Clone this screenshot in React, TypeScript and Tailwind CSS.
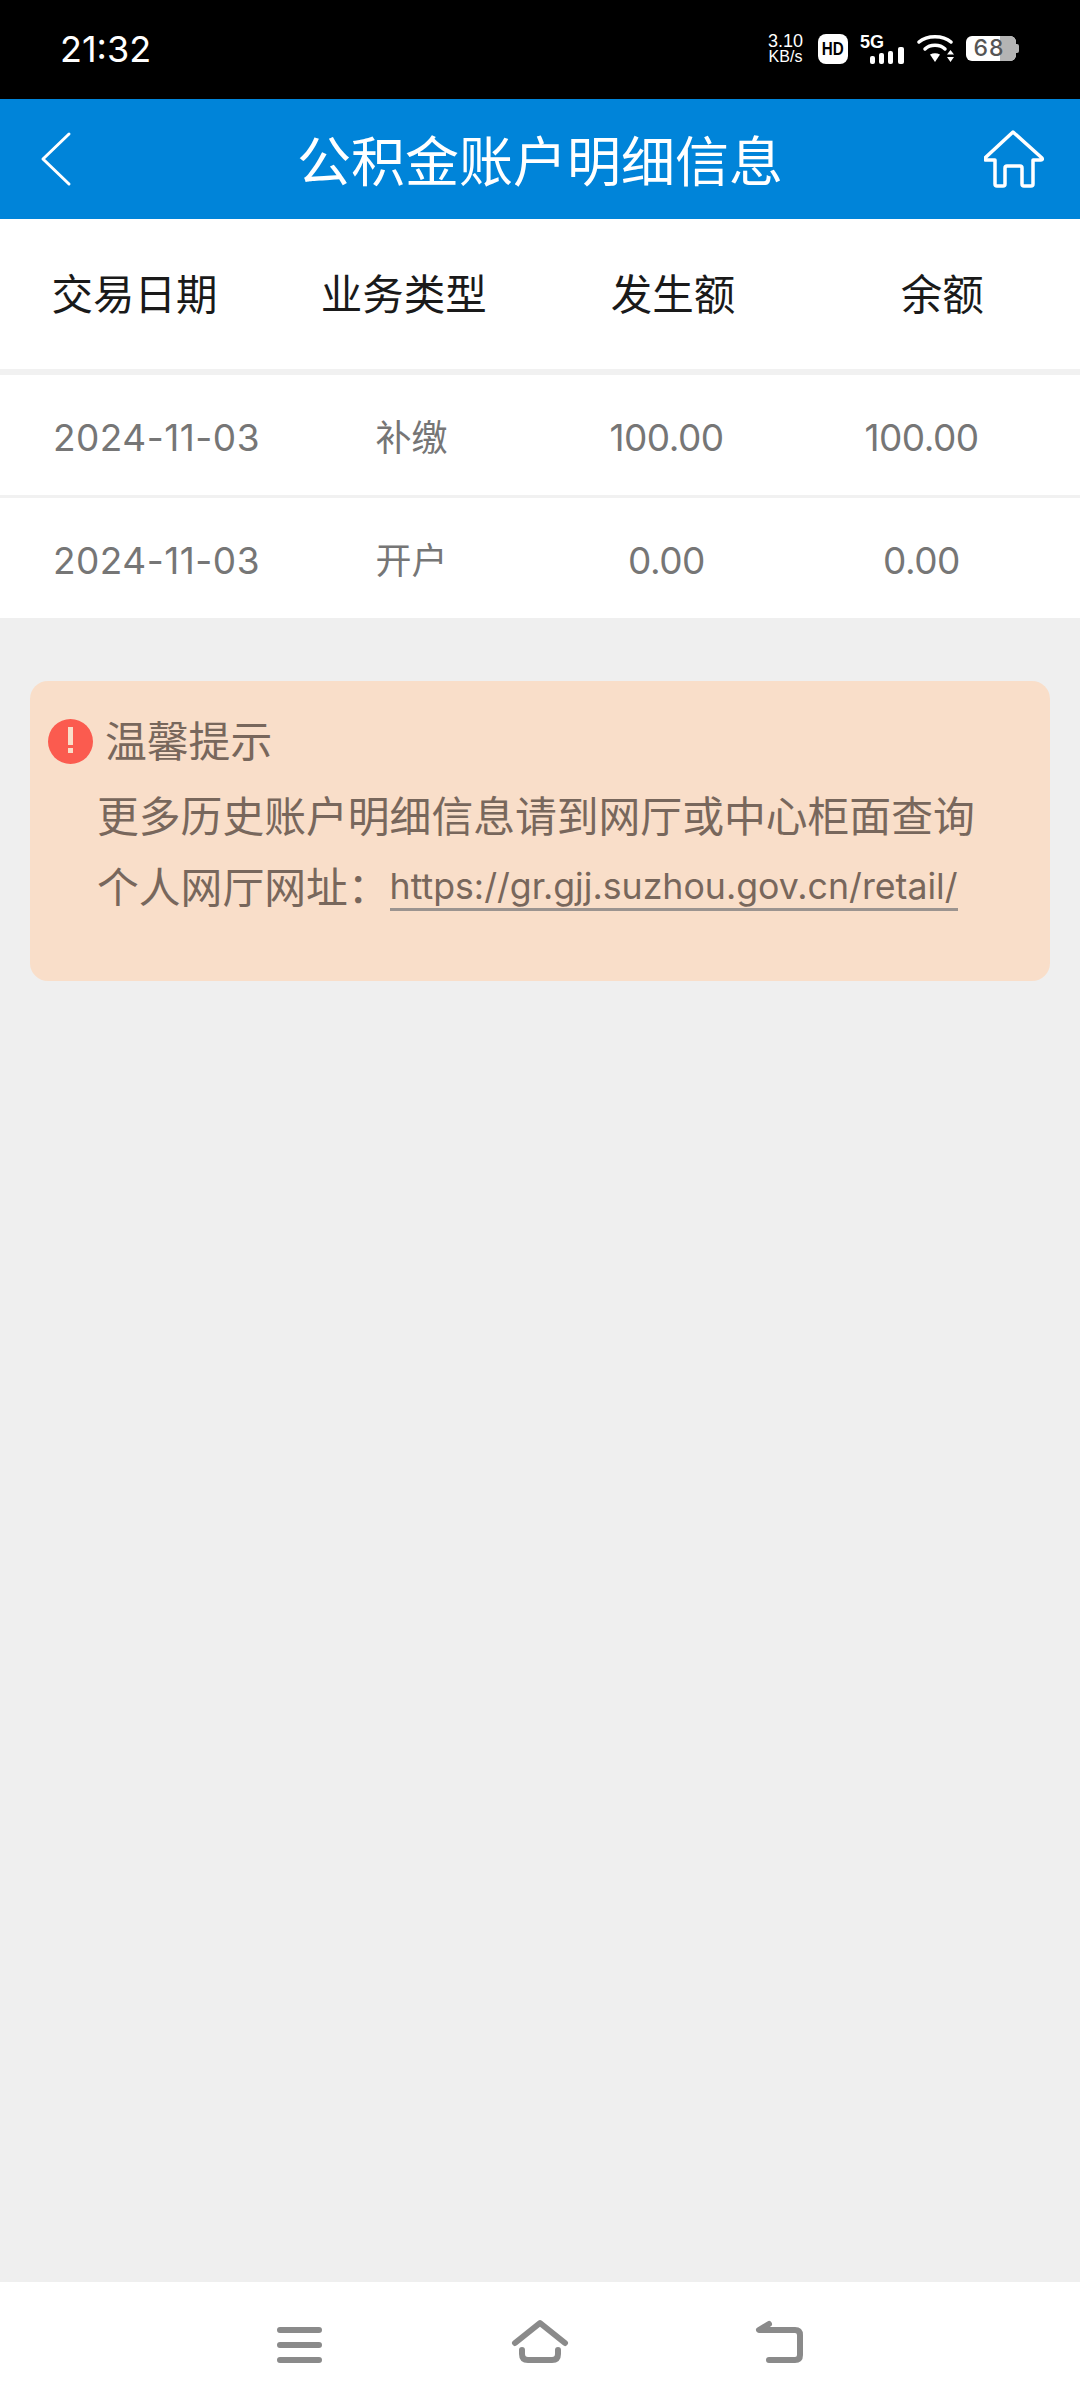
const cjk = "font-['Inter','Noto_Sans_CJK_SC',sans-serif]";

function StatusBar() {
  return (
    <div className="flex h-[99px] items-center justify-between bg-black pb-[2px] pl-[60px] pr-[61px] text-white">
      <span className="font-['Inter',sans-serif] text-[36px] leading-none">21:32</span>
      <div className="flex items-center">
        <div className="flex w-[37px] flex-col items-center font-['Liberation_Sans',sans-serif] text-white">
          <span className="text-[18px] leading-[16px]">3.10</span>
          <span className="text-[16px] leading-[15px]">KB/s</span>
        </div>
        <div className="ml-[14px] flex h-[30px] w-[30px] items-center justify-center rounded-[8px] bg-white">
          <span className="scale-x-[0.8] font-['Liberation_Sans',sans-serif] text-[19px] font-bold leading-none text-black">HD</span>
        </div>
        <div className="relative ml-[12px] h-[30px] w-[45px]">
          <span className="absolute left-0 top-0 font-['Liberation_Sans',sans-serif] text-[18px] font-bold leading-[17px]">5G</span>
          <svg className="absolute bottom-0 left-0" width="45" height="17" viewBox="0 0 45 17" fill="white">
            <rect x="10" y="9" width="5" height="8" rx="2" />
            <rect x="19" y="6" width="5" height="11" rx="2" />
            <rect x="28" y="4" width="5" height="13" rx="2" />
            <rect x="38" y="0" width="6" height="17" rx="2" />
          </svg>
        </div>
        <svg className="ml-[12px]" width="38" height="28" viewBox="0 0 38 28" fill="none">
          <path d="M2 7 C10 0 26 0 34 7" stroke="white" strokeWidth="3.500" strokeLinecap="round" />
          <path d="M8 14 C13 9 23 9 28 14" stroke="white" strokeWidth="3.500" strokeLinecap="round" />
          <path d="M13 19.500 Q18 17 23 19.500 L18 27 Z" fill="white" />
          <path d="M33.500 15 L37 19.500 L30 19.500 Z M30 22 L37 22 L33.500 27 Z" fill="white" />
        </svg>
        <div className="relative ml-[11px] flex h-[25px] w-[50px] items-center justify-center rounded-[6px] bg-white pr-[4px]">
          <div className="absolute right-0 top-0 h-full w-[16px] rounded-r-[6px] bg-[#b4b4b4]" />
          <span className="relative font-['Inter',sans-serif] text-[23px] font-medium leading-[25px] tracking-[1px] text-[#555555]">68</span>
        </div>
        <div className="h-[9px] w-[3px] rounded-r-[2px] bg-[#b4b4b4]" />
      </div>
    </div>
  );
}

function Header() {
  return (
    <div className="flex h-[120px] items-center justify-between bg-[#0084d9] px-[32px] text-white">
      <svg width="64" height="56" viewBox="0 0 64 56" fill="none">
        <path d="M37 3 L11 28 L37 53" stroke="white" strokeWidth="3" strokeLinecap="round" strokeLinejoin="round" />
      </svg>
      <h1 className={`${cjk} pt-[7px] text-[54px] font-normal leading-none`}>公积金账户明细信息</h1>
      <svg width="64" height="60" viewBox="2 0 64 60" fill="none">
        <path d="M31 3 L60 29 Q61 31 59 31 L51 31 L51 55 Q51 57 49 57 L42 57 Q40 57 40 55 L40 39 Q40 37 38 37 L25 37 Q23 37 23 39 L23 55 Q23 57 21 57 L15 57 Q13 57 13 55 L13 31 L4 31 Q2 31 3 29 Z" stroke="white" strokeWidth="3.500" strokeLinejoin="round" />
      </svg>
    </div>
  );
}

function Row({ cols }: { cols: string[] }) {
  return (
    <div className="grid h-[120px] grid-cols-4 items-center bg-white pl-[29px] pr-[31px] pt-[5px] text-center leading-none text-[#767676]">
      <span className={`${cjk} text-[37px] tracking-[0.5px]`}>{cols[0]}</span>
      <span className={`${cjk} text-[36px]`}>{cols[1]}</span>
      <span className={`${cjk} text-[37px] tracking-[-0.5px]`}>{cols[2]}</span>
      <span className={`${cjk} text-[37px] tracking-[-0.5px]`}>{cols[3]}</span>
    </div>
  );
}

function Nav() {
  const c = "#8a8a8a";
  return (
    <div className="flex h-[126px] items-start justify-center bg-white pt-[35px]">
      <svg width="51" height="50" viewBox="0 0 51 50" fill="none" className="mr-[184px]">
        <path d="M6 13 H45 M6 28 H45 M6 43 H45" stroke={c} strokeWidth="6" strokeLinecap="round" />
      </svg>
      <svg width="62" height="50" viewBox="0 0 62 50" fill="none" className="mr-[182px]">
        <path d="M6 26 L31 6 L56 26" stroke={c} strokeWidth="6" strokeLinecap="round" strokeLinejoin="round" />
        <path d="M13 33 V37 Q13 43 19 43 H43 Q49 43 49 37 V33" stroke={c} strokeWidth="6" strokeLinecap="round" />
      </svg>
      <svg width="53" height="50" viewBox="0 0 53 50" fill="none">
        <path d="M16 7 L6 13 H42 Q47 13 47 18 V38 Q47 43 42 43 H16" stroke={c} strokeWidth="6" strokeLinecap="round" strokeLinejoin="round" />
      </svg>
    </div>
  );
}

export default function App() {
  return (
    <div className="flex h-[2408px] w-[1080px] flex-col overflow-hidden bg-[#efefef]">
      <StatusBar />
      <Header />
      <div className="grid h-[150px] grid-cols-4 items-center bg-white pr-[3px] pt-[3px] text-center text-[41.500px] leading-none text-[#1a1a1a]">
        <span className={cjk}>交易日期</span>
        <span className={cjk}>业务类型</span>
        <span className={cjk}>发生额</span>
        <span className={cjk}>余额</span>
      </div>
      <div className="h-[6px] bg-[#f1f1f1]" />
      <Row cols={["2024-11-03", "补缴", "100.00", "100.00"]} />
      <div className="h-[3px] bg-[#f1f1f1]" />
      <Row cols={["2024-11-03", "开户", "0.00", "0.00"]} />
      <div className="flex-1 px-[30px] pt-[63px]">
        <div className={`${cjk} h-[300px] rounded-[18px] bg-[#f9dec9] pl-[18px] pt-[34px] text-[#78675c]`}>
          <div className="flex items-center">
            <svg width="45" height="45" viewBox="0 0 45 45">
              <circle cx="22.500" cy="22.500" r="22.500" fill="#fb5b4f" />
              <rect x="20" y="8" width="5" height="18" fill="#f9dec9" />
              <rect x="20" y="29" width="5" height="5" fill="#f9dec9" />
            </svg>
            <span className="ml-[12px] pt-[2px] text-[41.800px] leading-[50px]">温馨提示</span>
          </div>
          <div className="ml-[49px] mt-[25px] text-[41.800px] leading-[50px]">更多历史账户明细信息请到网厅或中心柜面查询</div>
          <div className="ml-[49px] mt-[21px] flex h-[50px] items-start text-[41.800px] leading-[50px]">
            <span>个人网厅网址：</span>
            <span className="mt-[1px] border-b-[3px] border-[#9c9490] text-[35.700px] leading-[44px]">https://gr.gjj.suzhou.gov.cn/retail/</span>
          </div>
        </div>
      </div>
      <Nav />
    </div>
  );
}
